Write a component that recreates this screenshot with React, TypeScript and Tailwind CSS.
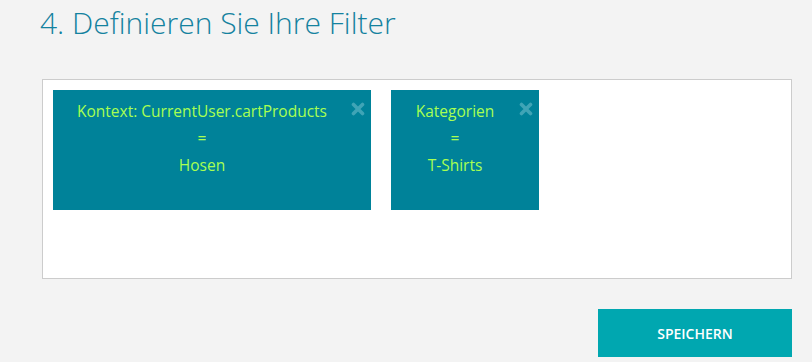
import React from 'react';

type Filter = { id: number; label: string; value: string; width: string };

const filters: Filter[] = [
  { id: 1, label: 'Kontext: CurrentUser.cartProducts', value: 'Hosen', width: 'w-[318px]' },
  { id: 2, label: 'Kategorien', value: 'T-Shirts', width: 'w-[148px]' },
];

function FilterCard({ filter }: { filter: Filter }) {
  return (
    <div className={`relative h-[120px] ${filter.width} bg-[#008299] pr-[20px] pt-[8px] text-center text-[15.5px] leading-[27px] text-[#a8ff52]`}>
      <div>{filter.label}</div>
      <div>=</div>
      <div>{filter.value}</div>
      {/* remove button */}
      <button type="button" className="absolute right-[6px] top-[12px] text-[#3fa4b6]">
        <svg width="14" height="14" viewBox="0 0 14 14">
          <path d="M2.5 2.5 L11.5 11.5 M11.5 2.5 L2.5 11.5" stroke="currentColor" strokeWidth="3.6" strokeLinecap="round" />
        </svg>
      </button>
    </div>
  );
}

export default function App() {
  return (
    <div className="h-[362px] w-[812px] bg-[#f3f3f3] font-['Open_Sans',sans-serif]">
      <h1 className="pl-[40px] pt-[1px] text-[30px] font-light leading-[44px] text-[#14829f]">
        4. Definieren Sie Ihre Filter
      </h1>
      <div className="ml-[42px] mt-[34px] h-[200px] w-[750px] border border-[#cccccc] bg-white p-[10px]">
        <div className="flex gap-[20px]">
          {filters.map((f) => (
            <FilterCard key={f.id} filter={f} />
          ))}
        </div>
      </div>
      <div className="flex justify-end pr-[20px] pt-[30px]">
        <button
          type="button"
          className="h-[48px] w-[194px] bg-[#00a7b0] text-[14px] font-semibold text-white"
        >
          SPEICHERN
        </button>
      </div>
    </div>
  );
}
